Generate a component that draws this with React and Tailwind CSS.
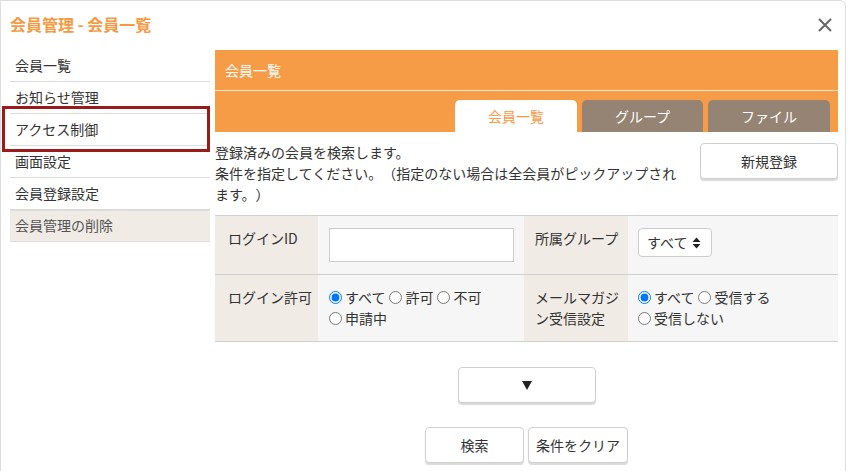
import React from 'react';

const menu = ['会員一覧', 'お知らせ管理', 'アクセス制御', '画面設定', '会員登録設定', '会員管理の削除'];

function Radio({ name, label, checked }) {
    return (
        <label className="inline-flex items-center mr-[4px] whitespace-nowrap">
            <input type="radio" name={name} defaultChecked={checked} className="m-0 mr-[3px] w-[13px] h-[13px]" />
            <span>{label}</span>
        </label>
    );
}

function Btn({ children, className }) {
    return (
        <button className={`bg-white border border-[#cfcfcf] rounded-[4px] shadow-[0_2px_1px_rgba(0,0,0,0.15)] text-[#333] text-[14px] flex items-center justify-center ${className}`}>
            {children}
        </button>
    );
}

export default function App() {
    return (
        <div className="min-h-screen bg-white text-[#333] [text-spacing-trim:space-all]" style={{ fontFamily: '"Noto Sans CJK JP", "Noto Sans", sans-serif' }}>
            <div className="relative w-[846px] h-[471px] border border-b-0 border-[#dedede] rounded-tr-[6px] overflow-hidden">
                {/* title bar */}
                <div className="flex items-center justify-between h-[49px] pl-[9px] pr-[12px]">
                    <h1 className="text-[16px] font-bold text-[#f59a42] leading-none mt-[-3px]">会員管理 - 会員一覧</h1>
                    <svg width="16" height="16" viewBox="0 0 16 16" className="mt-[-1px]">
                        <path d="M2 2 L14 14 M14 2 L2 14" stroke="#666" strokeWidth="2" />
                    </svg>
                </div>

                <div className="flex gap-[5px] pl-[9px]">
                    {/* side menu */}
                    <ul className="w-[200px] text-[14px]">
                        {menu.map((m, i) => (
                            <li key={m} className={`h-[32px] flex items-center pl-[5px] pb-[2px] border-b border-[#dcdcdc] leading-none ${i === menu.length - 1 ? 'bg-[#f0ebe5] border-t text-[#555]' : ''}`}>
                                {m}
                            </li>
                        ))}
                    </ul>

                    {/* main */}
                    <div className="w-[623px]">
                        <div className="bg-[#f69b46]">
                            <div className="h-[41px] flex items-center pl-[10px] text-white text-[14px] border-b border-[#fde3cc]">会員一覧</div>
                            <div className="h-[41px] flex items-end justify-end gap-[5px] pr-[8px]">
                                <div className="w-[122px] h-[32px] bg-white rounded-t-[5px] flex items-center justify-center text-[#f59a45] text-[14px]">会員一覧</div>
                                <div className="w-[121px] h-[32px] bg-[#958373] rounded-t-[5px] flex items-center justify-center text-white text-[14px]">グループ</div>
                                <div className="w-[122px] h-[32px] bg-[#958373] rounded-t-[5px] flex items-center justify-center text-white text-[14px]">ファイル</div>
                            </div>
                        </div>

                        <div className="flex pt-[10px]">
                            <p className="w-[470px] text-[14px] leading-[21px]">
                                登録済みの会員を検索します。<br />
                                条件を指定してください。（指定のない場合は全会員がピックアップされます。）
                            </p>
                            <Btn className="ml-auto w-[138px] h-[36px] mt-[1px]">新規登録</Btn>
                        </div>

                        <div className="mt-[10px] border-t border-[#d0d0d0] text-[14px] leading-[21px]">
                            <div className="flex border-b border-[#d0d0d0]">
                                <div className="w-[103px] bg-[#f0ebe5] pl-[13px] pr-[4px] py-[12px]">ログインID</div>
                                <div className="w-[206px] bg-[#f6f6f6] pl-[11px] py-[12px]">
                                    <input type="text" className="block w-[185px] h-[34px] bg-white border border-[#cccccc] outline-none" />
                                </div>
                                <div className="w-[104px] bg-[#f0ebe5] pl-[11px] pr-[8px] py-[12px]">所属グループ</div>
                                <div className="w-[210px] bg-[#f6f6f6] pl-[10px] py-[12px]">
                                    <div className="w-[74px] h-[29px] bg-white border border-[#cccccc] rounded-[4px] flex items-center pl-[8px] gap-[5px]">
                                        <span>すべて</span>
                                        <svg width="9" height="12" viewBox="0 0 9 12">
                                            <path d="M4.5 0.5 L8.5 5 L0.5 5 Z M0.5 7 L8.5 7 L4.5 11.5 Z" fill="#222" />
                                        </svg>
                                    </div>
                                </div>
                            </div>
                            <div className="flex border-b border-[#d0d0d0]">
                                <div className="w-[103px] bg-[#f0ebe5] pl-[13px] pr-[4px] py-[12px]">ログイン許可</div>
                                <div className="w-[206px] bg-[#f6f6f6] pl-[11px] pr-[8px] py-[12px] flex flex-wrap content-start">
                                    <Radio name="login" label="すべて" checked />
                                    <Radio name="login" label="許可" />
                                    <Radio name="login" label="不可" />
                                    <Radio name="login" label="申請中" />
                                </div>
                                <div className="w-[104px] bg-[#f0ebe5] pl-[11px] pr-[8px] py-[12px]">メールマガジン受信設定</div>
                                <div className="w-[210px] bg-[#f6f6f6] pl-[10px] pr-[10px] py-[12px] flex flex-wrap content-start">
                                    <Radio name="mail" label="すべて" checked />
                                    <Radio name="mail" label="受信する" />
                                    <Radio name="mail" label="受信しない" />
                                </div>
                            </div>
                        </div>

                        <div className="flex justify-center mt-[25px]">
                            <Btn className="w-[138px] h-[36px]">
                                <svg width="10" height="9" viewBox="0 0 10 9">
                                    <path d="M0 0 L10 0 L5 9 Z" fill="#222" />
                                </svg>
                            </Btn>
                        </div>
                        <div className="flex justify-center gap-[4px] mt-[24px]">
                            <Btn className="w-[99px] h-[36px]">検索</Btn>
                            <Btn className="w-[100px] h-[36px]">条件をクリア</Btn>
                        </div>
                    </div>
                </div>

                {/* highlight annotation */}
                <div className="absolute left-[1px] top-[105px] w-[208px] h-[46px] border-[3px] border-[#9c1a1a] pointer-events-none" />
            </div>
        </div>
    );
}
